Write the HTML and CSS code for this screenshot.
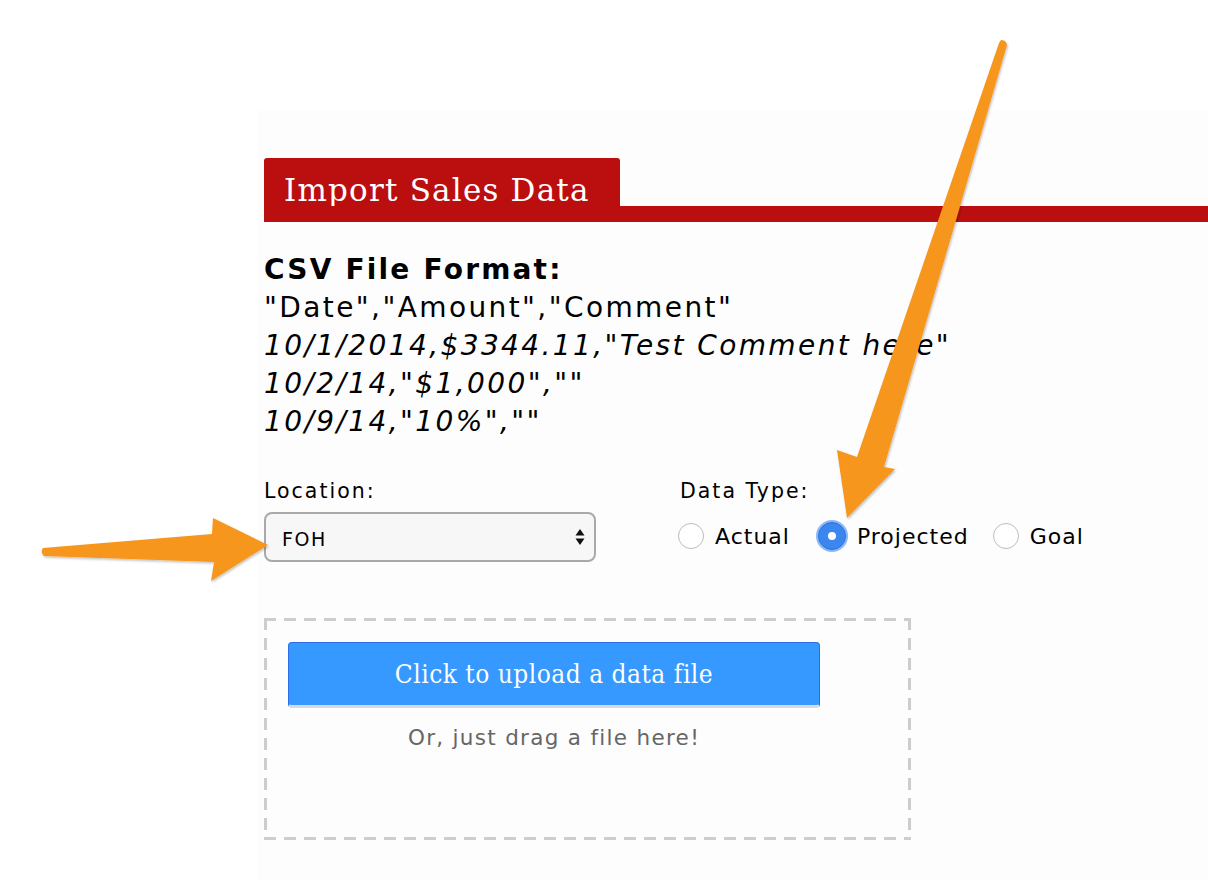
FILE: index.html
```html
<!DOCTYPE html>
<html>
<head>
<meta charset="utf-8">
<link rel="stylesheet" href="styles.css">
</head>
<body>
<div class="panel">
  <div class="header">
    <div class="tab">Import Sales Data</div>
    <div class="bar"></div>
  </div>
  <div class="format">
    <div class="fmt-title">CSV File Format:</div>
    <div>"Date","Amount","Comment"</div>
    <div class="ex">10/1/2014,$3344.11,"Test Comment here"</div>
    <div class="ex">10/2/14,"$1,000",""</div>
    <div class="ex">10/9/14,"10%",""</div>
  </div>
  <div class="controls">
    <div class="loc">
      <div class="label">Location:</div>
      <div class="select"><span>FOH</span>
        <svg class="updown" width="10" height="18" viewBox="0 0 10 18"><path d="M5 1 L9.5 7.5 H0.5 Z M5 17 L9.5 10.5 H0.5 Z" fill="#111"/></svg>
      </div>
    </div>
    <div class="dtype">
      <div class="label">Data Type:</div>
      <div class="radios">
        <span class="radio"><span class="dot"></span>Actual</span>
        <span class="radio"><span class="dot on"></span>Projected</span>
        <span class="radio"><span class="dot"></span>Goal</span>
      </div>
    </div>
  </div>
  <div class="drop">
    <div class="upload">Click to upload a data file</div>
    <div class="hint">Or, just drag a file here!</div>
  </div>
</div>
<svg class="arrows" width="1208" height="880" viewBox="0 0 1208 880">
  <defs>
    <filter id="sh" x="-20%" y="-20%" width="140%" height="140%">
      <feDropShadow dx="1" dy="1.5" stdDeviation="1.2" flood-color="#000" flood-opacity="0.25"/>
    </filter>
  </defs>
  <g fill="#f7961d" filter="url(#sh)">
    <path d="M43 548 Q40 552 44 556 L214 562 L211 581 L268 545 L213 518 L212 534 Z"/>
    <path d="M1001 40 Q1006 40 1007 45 L884 467 L895 469 L847 518 L837 450 L857 457 L999 43 Z"/>
  </g>
</svg>
</body>
</html>
```
FILE: styles.css
```css
html, body { margin: 0; padding: 0; background: #fff; }
body { width: 1208px; height: 880px; overflow: hidden; position: relative; font-family: "DejaVu Sans", Verdana, sans-serif; color: #000; }
.panel { margin: 110px 0 0 258px; height: 770px; background: #fdfdfd; padding-left: 6px; padding-top: 48px; box-sizing: border-box; }
.header { display: flex; flex-direction: column; }
.tab { align-self: flex-start; width: 356px; height: 48px; box-sizing: border-box; background: #bb0e0e; color: #fff; border-radius: 3px 3px 0 0; font-family: "DejaVu Serif", serif; font-size: 31px; line-height: 48px; padding: 8px 0 0 20px; letter-spacing: 1.2px; white-space: nowrap; }
.bar { height: 16px; background: #bb0e0e; }
.format { margin-top: 29px; font-size: 28px; line-height: 38px; letter-spacing: 2.4px; white-space: nowrap; }
.fmt-title { font-weight: bold; letter-spacing: 2.2px; }
.ex { font-style: italic; }
.controls { display: flex; margin-top: 38px; }
.loc { width: 416px; }
.label { font-size: 20.5px; line-height: 24px; letter-spacing: 2px; }
.select { margin-top: 9px; width: 332px; height: 50px; box-sizing: border-box; border: 2px solid #a9a9a9; border-radius: 8px; background: #f7f7f7; display: flex; align-items: center; justify-content: space-between; padding: 0 9px 0 16px; font-size: 19px; letter-spacing: 1.5px; }
.select span { padding-top: 3px; }
.radios { display: flex; align-items: center; margin-top: 19px; font-size: 22px; letter-spacing: 1px; }
.radio { display: flex; align-items: center; margin-right: 26px; }
.dot { width: 26px; height: 26px; border-radius: 50%; border: 1px solid #bcbcbc; background: #fff; box-sizing: border-box; margin: 0 11px 0 -2px; }
.dot.on { width: 28px; height: 28px; background: #3c86f0; border: 1px solid #2f73e0; box-shadow: 0 0 0 2px #8ab8f7; position: relative; margin-left: 2px; margin-right: 11px; }
.dot.on::after { content: ""; position: absolute; left: 9px; top: 9px; width: 8px; height: 8px; border-radius: 50%; background: #fff; }
.drop { margin-top: 56px; width: 647px; height: 222px; box-sizing: border-box; padding: 24px 0 0 24px;
  background:
    repeating-linear-gradient(90deg, #cdcdcd 0 12px, transparent 12px 20px) left top / 100% 3px no-repeat,
    repeating-linear-gradient(90deg, #cdcdcd 0 12px, transparent 12px 20px) left bottom / 100% 3px no-repeat,
    repeating-linear-gradient(180deg, #cdcdcd 0 12px, transparent 12px 20px) left top / 3px 100% no-repeat,
    repeating-linear-gradient(180deg, #cdcdcd 0 12px, transparent 12px 20px) right top / 3px 100% no-repeat; }
.upload { width: 532px; height: 66px; box-sizing: border-box; background: #3599ff; border: 1px solid #2f6ae8; border-bottom: 3px solid #d9d9d9; border-radius: 4px; color: #fff; font-family: "DejaVu Serif Condensed", "DejaVu Serif", serif; font-stretch: condensed; font-size: 26px; letter-spacing: 0.5px; text-align: center; line-height: 62px; white-space: nowrap; }
.hint { width: 532px; text-align: center; color: #666; font-size: 21.5px; letter-spacing: 1.3px; margin-top: 17px; }
.arrows { position: absolute; left: 0; top: 0; pointer-events: none; }
```
